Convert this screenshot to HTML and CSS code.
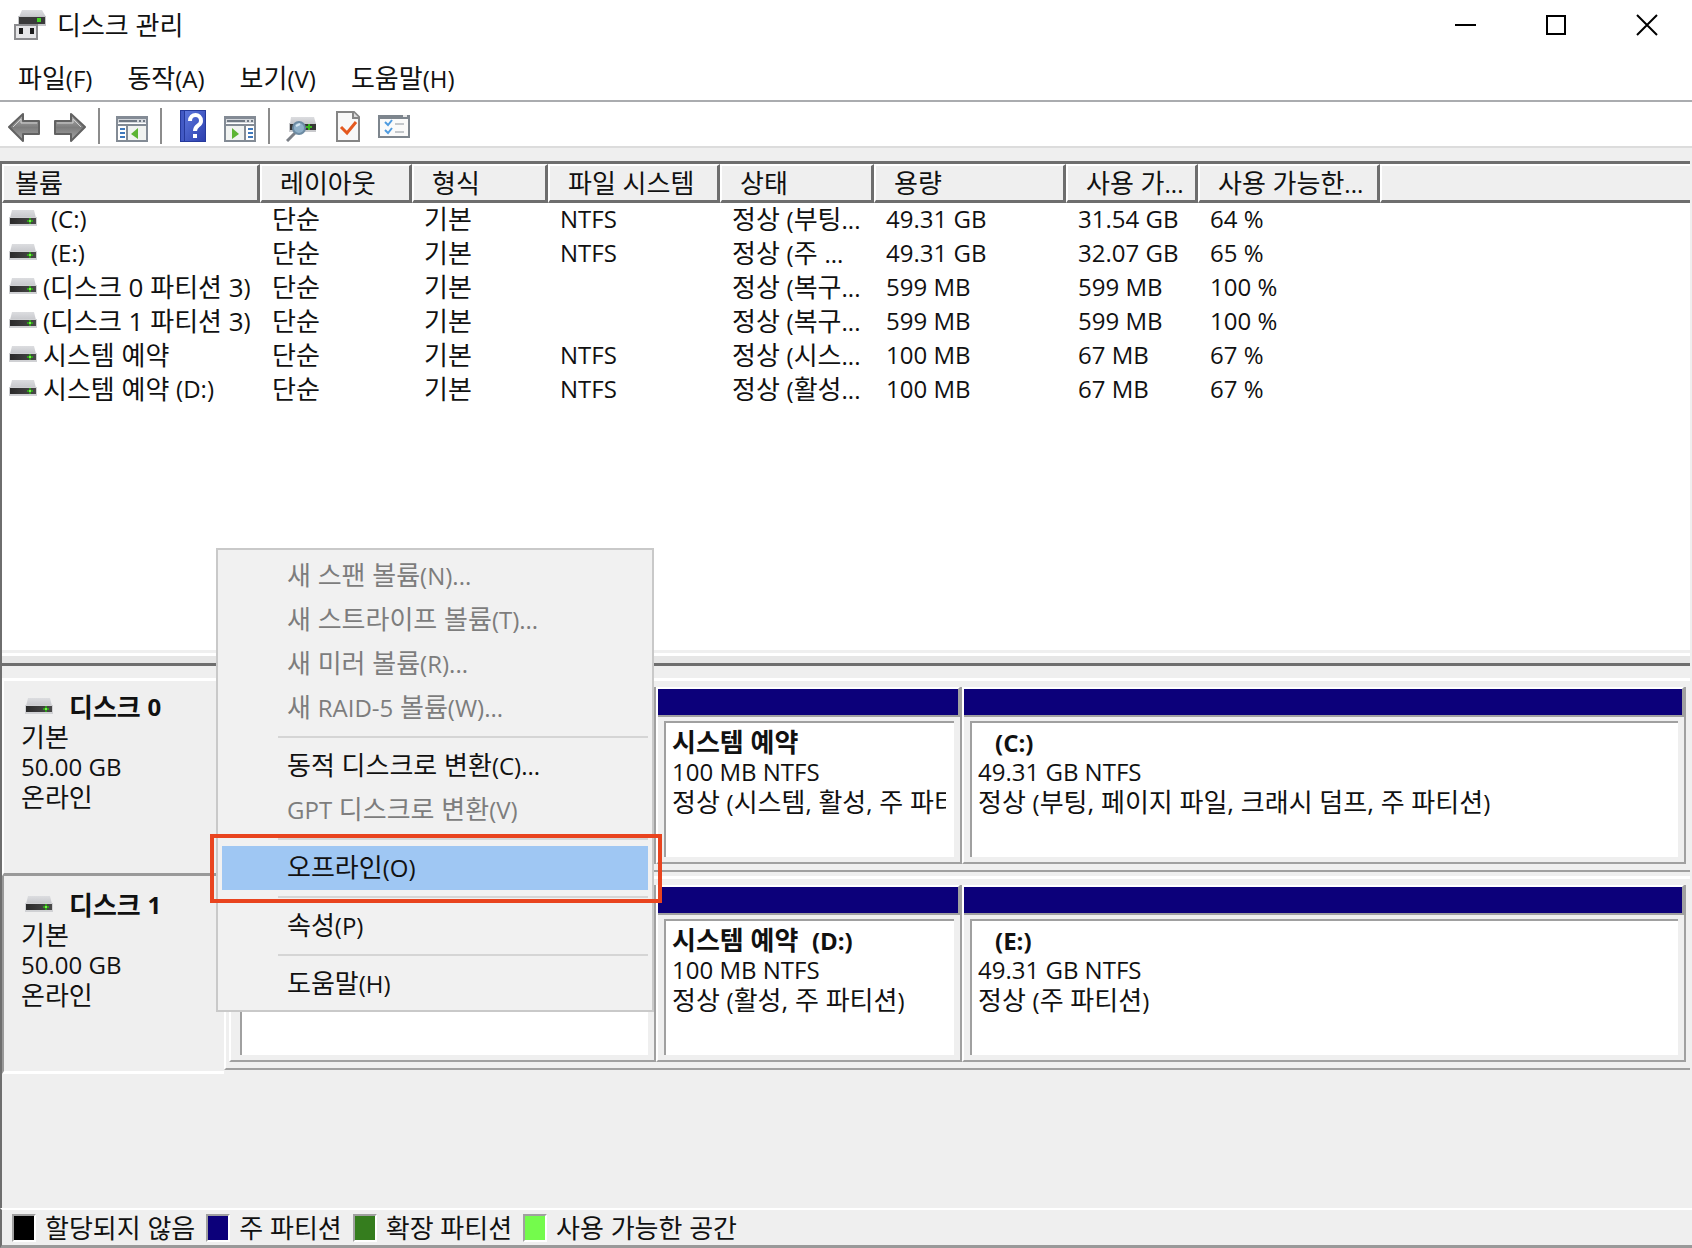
FILE: index.html
```html
<!DOCTYPE html>
<html lang="ko">
<head>
<meta charset="utf-8">
<meta name="viewport" content="width=device-width, initial-scale=1">
<title>디스크 관리</title>
<link rel="stylesheet" href="styles.css">
</head>
<body>
<svg class="defs" width="0" height="0" aria-hidden="true">
  <defs>
    <linearGradient id="lid" x1="0" y1="0" x2="0" y2="1"><stop offset="0" stop-color="#dcdde0"/><stop offset="1" stop-color="#c6c7cb"/></linearGradient>
    <linearGradient id="slot" x1="0" y1="0" x2="1" y2="0"><stop offset="0" stop-color="#2b2b2b"/><stop offset="1" stop-color="#4a4a4a"/></linearGradient>
    <linearGradient id="metal" x1="0" y1="0" x2="0" y2="1"><stop offset="0" stop-color="#b5b5b5"/><stop offset="0.5" stop-color="#7c7c7c"/><stop offset="1" stop-color="#a8a8a8"/></linearGradient>
    <linearGradient id="book" x1="0" y1="0" x2="1" y2="1"><stop offset="0" stop-color="#5c76dc"/><stop offset="1" stop-color="#2c3fae"/></linearGradient>
    <symbol id="drive" viewBox="0 0 28 18">
      <path d="M3 0h22l2 8H1z" fill="url(#lid)"/>
      <path d="M0 7h28v9H0z" fill="#d0d1d4"/>
      <path d="M1 8h26v6H1z" fill="url(#slot)"/>
      <path d="M21 8v6M18 11h6" stroke="#2f9a1c" stroke-width="2"/>
      <path d="M20 10h2v2h-2z" fill="#7cf04a"/>
    </symbol>
  </defs>
</svg>

<header class="titlebar">
  <svg class="app-icon" viewBox="0 0 34 32" aria-hidden="true">
    <path d="M9 1h20l4 7H6z" fill="url(#lid)"/>
    <path d="M5 7h28v10H5z" fill="#c4c5c8"/>
    <path d="M6 8h26v7H6z" fill="#3a3a3a"/>
    <path d="M24 9h4v4h-4z" fill="#43d425"/>
    <path d="M2 16h22v14H2z" fill="#e6e6e8" stroke="#8b8b8e" stroke-width="2"/>
    <path d="M6 19h4v6H6zM17 19h4v6h-4z" fill="#1d1d1d"/>
  </svg>
  <h1 class="title">디스크 관리</h1>
  <div class="controls">
    <button type="button" aria-label="최소화"><svg viewBox="0 0 22 22"><path d="M1 11h21" stroke="#000" stroke-width="2"/></svg></button>
    <button type="button" aria-label="최대화"><svg viewBox="0 0 22 22"><path d="M2 2h18v18H2z" fill="none" stroke="#000" stroke-width="2"/></svg></button>
    <button type="button" aria-label="닫기"><svg viewBox="0 0 22 22"><path d="M1 1l20 20M21 1L1 21" stroke="#000" stroke-width="2"/></svg></button>
  </div>
</header>

<nav class="menubar">
  <button type="button">파일<span class="en">(F)</span></button>
  <button type="button">동작<span class="en">(A)</span></button>
  <button type="button">보기<span class="en">(V)</span></button>
  <button type="button">도움말<span class="en">(H)</span></button>
</nav>

<div class="toolbar">
  <button type="button" aria-label="뒤로"><svg viewBox="0 0 32 32"><path d="M1 17L15 4v7h16v13H15v7z" fill="url(#metal)" stroke="#626262" stroke-width="2" stroke-linejoin="round"/><path d="M5 17l8-8v4h16" fill="none" stroke="#cfcfcf"/></svg></button>
  <button type="button" aria-label="앞으로"><svg viewBox="0 0 32 32"><path d="M31 17L17 4v7H1v13h16v7z" fill="url(#metal)" stroke="#626262" stroke-width="2" stroke-linejoin="round"/><path d="M3 13h16V9l8 8" fill="none" stroke="#cfcfcf"/></svg></button>
  <span class="sep"></span>
  <button type="button" aria-label="콘솔 트리 표시/숨기기"><svg viewBox="0 0 32 32">
    <path d="M1 7h30v24H1z" fill="#fff" stroke="#838b95" stroke-width="2"/><path d="M2 8h28v5H2z" fill="#d5d9de"/><path d="M2 8h28" stroke="#838b95" stroke-width="2"/><path d="M3 11h18M23 11h2M27 11h2" stroke="#6f7883" stroke-width="2"/><path d="M1 15h30M11 15v16" stroke="#838b95" stroke-width="2"/><path d="M4 19h5M4 23h5M4 27h5" stroke="#3f79bd" stroke-width="2"/><path d="M12 16h18v14H12z" fill="#f1f3f1"/><path d="M22 18v11l-7-5z" fill="#5db534"/></svg></button>
  <span class="sep"></span>
  <button type="button" aria-label="도움말"><svg viewBox="0 0 32 32"><path d="M2 0h26v32H2z" fill="#263a9c"/><path d="M7 1h20v30H7z" fill="url(#book)"/><path d="M3 1h3v30H3z" fill="#4259c4"/><path d="M12 11c0-8 11-8 11 0 0 5-6 4-6 10" fill="none" stroke="#fff" stroke-width="4"/><path d="M15 24h4v4h-4z" fill="#fff"/></svg></button>
  <button type="button" aria-label="작업 창 표시/숨기기"><svg viewBox="0 0 32 32">
    <path d="M1 7h30v24H1z" fill="#fff" stroke="#838b95" stroke-width="2"/><path d="M2 8h28v5H2z" fill="#d5d9de"/><path d="M2 8h28" stroke="#838b95" stroke-width="2"/><path d="M3 11h18M23 11h2M27 11h2" stroke="#6f7883" stroke-width="2"/><path d="M1 15h30M21 15v16" stroke="#838b95" stroke-width="2"/><path d="M24 19h5M24 23h5M24 27h5" stroke="#3f79bd" stroke-width="2"/><path d="M2 16h18v14H2z" fill="#f1f3f1"/><path d="M8 18v11l7-5z" fill="#5db534"/></svg></button>
  <span class="sep"></span>
  <button type="button" aria-label="디스크 다시 검색"><svg viewBox="0 0 32 32"><path d="M5 7h23l2 7H4z" fill="url(#lid)"/><path d="M3 13h27v9H3z" fill="#c9cacd"/><path d="M4 14h26v6H4z" fill="#363636"/><path d="M23 14v6M20 17h6" stroke="#39b51f" stroke-width="2"/><path d="M9 23l-8 8" stroke="#7a7f86" stroke-width="3"/><circle cx="13" cy="18" r="6" fill="#8fb0c8" stroke="#6c8ba3" stroke-width="2"/><path d="M10 16l4-2" stroke="#d4e6f2" stroke-width="2"/></svg></button>
  <button type="button" aria-label="속성"><svg viewBox="0 0 32 32"><path d="M5 2h17l5 5v24H5z" fill="#f8f8f8" stroke="#858585" stroke-width="2"/><path d="M21 2v6h6" fill="#dcdcdc" stroke="#858585" stroke-width="2"/><path d="M9 17l6 6 9-11" fill="none" stroke="#e4581e" stroke-width="3"/></svg></button>
  <button type="button" aria-label="설정"><svg viewBox="0 0 32 32"><path d="M1 6h30v21H1z" fill="#fafafa" stroke="#7d858d" stroke-width="2"/><path d="M0 5h32v4H0z" fill="#7d858d"/><path d="M25 6h4" stroke="#e8e8e8" stroke-width="2"/><path d="M7 12l3 3 4-5M7 20l3 3 4-5" fill="none" stroke="#4e9be0" stroke-width="2"/><path d="M17 14h9M17 22h9" stroke="#c3c7cb" stroke-width="2"/></svg></button>
</div>

<main class="workspace">
  <section class="volumes" aria-label="볼륨 목록">
    <table class="volume-table">
      <colgroup>
        <col class="c-vol"><col class="c-layout"><col class="c-type"><col class="c-fs"><col class="c-status"><col class="c-size"><col class="c-free"><col class="c-pct"><col>
      </colgroup>
      <thead>
        <tr><th>볼륨</th><th>레이아웃</th><th>형식</th><th>파일 시스템</th><th>상태</th><th>용량</th><th>사용 가<span class="en">...</span></th><th>사용 가능한<span class="en">...</span></th><th></th></tr>
      </thead>
      <tbody>
        <tr><td><svg class="drive"><use href="#drive"/></svg><span class="letter en">(C:)</span></td><td>단순</td><td>기본</td><td class="en">NTFS</td><td>정상 <span class="en">(</span>부팅<span class="en">...</span></td><td class="en">49.31 GB</td><td class="en">31.54 GB</td><td class="en">64 %</td><td></td></tr>
        <tr><td><svg class="drive"><use href="#drive"/></svg><span class="letter en">(E:)</span></td><td>단순</td><td>기본</td><td class="en">NTFS</td><td>정상 <span class="en">(</span>주 <span class="en">...</span></td><td class="en">49.31 GB</td><td class="en">32.07 GB</td><td class="en">65 %</td><td></td></tr>
        <tr><td><svg class="drive"><use href="#drive"/></svg><span class="en">(</span>디스크 0 파티션 3<span class="en">)</span></td><td>단순</td><td>기본</td><td></td><td>정상 <span class="en">(</span>복구<span class="en">...</span></td><td class="en">599 MB</td><td class="en">599 MB</td><td class="en">100 %</td><td></td></tr>
        <tr><td><svg class="drive"><use href="#drive"/></svg><span class="en">(</span>디스크 1 파티션 3<span class="en">)</span></td><td>단순</td><td>기본</td><td></td><td>정상 <span class="en">(</span>복구<span class="en">...</span></td><td class="en">599 MB</td><td class="en">599 MB</td><td class="en">100 %</td><td></td></tr>
        <tr><td><svg class="drive"><use href="#drive"/></svg>시스템 예약</td><td>단순</td><td>기본</td><td class="en">NTFS</td><td>정상 <span class="en">(</span>시스<span class="en">...</span></td><td class="en">100 MB</td><td class="en">67 MB</td><td class="en">67 %</td><td></td></tr>
        <tr><td><svg class="drive"><use href="#drive"/></svg>시스템 예약 <span class="en">(D:)</span></td><td>단순</td><td>기본</td><td class="en">NTFS</td><td>정상 <span class="en">(</span>활성<span class="en">...</span></td><td class="en">100 MB</td><td class="en">67 MB</td><td class="en">67 %</td><td></td></tr>
      </tbody>
    </table>
  </section>

  <div class="splitter"></div>

  <section class="disks" aria-label="디스크 보기">
    <article class="disk">
      <div class="disk-label">
        <h2><svg class="drive"><use href="#drive"/></svg>디스크 <span class="en">0</span></h2>
        <p>기본</p>
        <p class="en">50.00 GB</p>
        <p>온라인</p>
      </div>
      <div class="partitions">
        <div class="partition"><div class="bar"></div><div class="body"><div class="info"></div></div></div>
        <div class="partition"><div class="bar"></div><div class="body"><div class="info">
          <h3>시스템 예약</h3>
          <p class="en">100 MB NTFS</p>
          <p>정상 <span class="en">(</span>시스템<span class="en">,</span> 활성<span class="en">,</span> 주 파티션<span class="en">)</span></p>
        </div></div></div>
        <div class="partition"><div class="bar"></div><div class="body"><div class="info">
          <h3 class="letter-only"><span class="en">(C:)</span></h3>
          <p class="en">49.31 GB NTFS</p>
          <p>정상 <span class="en">(</span>부팅, 페이지 파일, 크래시 덤프, 주 파티션<span class="en">)</span></p>
        </div></div></div>
      </div>
    </article>
    <article class="disk">
      <div class="disk-label selected">
        <h2><svg class="drive"><use href="#drive"/></svg>디스크 <span class="en">1</span></h2>
        <p>기본</p>
        <p class="en">50.00 GB</p>
        <p>온라인</p>
      </div>
      <div class="partitions">
        <div class="partition"><div class="bar"></div><div class="body"><div class="info"></div></div></div>
        <div class="partition"><div class="bar"></div><div class="body"><div class="info">
          <h3>시스템 예약 &nbsp;<span class="en">(D:)</span></h3>
          <p class="en">100 MB NTFS</p>
          <p>정상 <span class="en">(</span>활성, 주 파티션<span class="en">)</span></p>
        </div></div></div>
        <div class="partition"><div class="bar"></div><div class="body"><div class="info">
          <h3 class="letter-only"><span class="en">(E:)</span></h3>
          <p class="en">49.31 GB NTFS</p>
          <p>정상 <span class="en">(</span>주 파티션<span class="en">)</span></p>
        </div></div></div>
      </div>
    </article>
  </section>

  <footer class="legend">
    <span class="key"><i class="swatch unallocated"></i>할당되지 않음</span>
    <span class="key"><i class="swatch primary"></i>주 파티션</span>
    <span class="key"><i class="swatch extended"></i>확장 파티션</span>
    <span class="key"><i class="swatch free"></i>사용 가능한 공간</span>
  </footer>
</main>

<div class="context-menu" role="menu">
  <button type="button" role="menuitem" disabled>새 스팬 볼륨<span class="en">(N)...</span></button>
  <button type="button" role="menuitem" disabled>새 스트라이프 볼륨<span class="en">(T)...</span></button>
  <button type="button" role="menuitem" disabled>새 미러 볼륨<span class="en">(R)...</span></button>
  <button type="button" role="menuitem" disabled>새 <span class="en">RAID-5</span> 볼륨<span class="en">(W)...</span></button>
  <hr>
  <button type="button" role="menuitem">동적 디스크로 변환<span class="en">(C)...</span></button>
  <button type="button" role="menuitem" disabled><span class="en">GPT</span> 디스크로 변환<span class="en">(V)</span></button>
  <hr>
  <div class="marked"><button type="button" role="menuitem" class="active">오프라인<span class="en">(O)</span></button></div>
  <hr>
  <button type="button" role="menuitem">속성<span class="en">(P)</span></button>
  <hr>
  <button type="button" role="menuitem">도움말<span class="en">(H)</span></button>
</div>
</body>
</html>
```
FILE: styles.css
```css
* { box-sizing: border-box; }

body {
  margin: 0;
  min-height: 100vh;
  display: flex;
  flex-direction: column;
  position: relative;
  background: #fff;
  color: #111;
  font-family: "Open Sans", "Noto Sans CJK KR", sans-serif;
  font-size: 26px;
  line-height: 30px;
}

button {
  margin: 0;
  padding: 0;
  border: 0;
  background: none;
  color: inherit;
  font: inherit;
  text-align: left;
  white-space: nowrap;
}

svg { display: block; flex: none; }
h1, h2, h3, p { margin: 0; font: inherit; white-space: nowrap; }
.defs { position: absolute; }
.en { font-size: 24px; }
span.en { line-height: 1; }

/* Title bar */
.titlebar { display: flex; align-items: center; height: 50px; padding-left: 13px; }
.app-icon { width: 34px; height: 32px; }
.title { margin-left: 10px; }
.controls { display: flex; margin-left: auto; }
.controls button { width: 91px; height: 48px; display: flex; align-items: center; justify-content: center; }
.controls svg { width: 22px; height: 22px; }

/* Menu bar */
.menubar { display: flex; height: 52px; padding: 5px 0 0 1px; border-bottom: 2px solid #aaacaf; }
.menubar button { padding: 0 18px 0 17px; }

/* Toolbar */
.toolbar { display: flex; align-items: center; height: 46px; padding: 4px 0 0 1px; border-bottom: 2px solid #dcdcdc; }
.toolbar button { padding: 0 7px; }
.toolbar svg { width: 32px; height: 32px; }
.sep { width: 2px; height: 36px; margin: 0 9px 0 5px; background: #8c8c8c; }

/* Workspace */
.workspace { flex: 1; display: flex; flex-direction: column; padding-top: 13px; background: #efefef; }
.volumes {
  min-height: 489px;
  margin-right: 2px;
  border-top: 3px solid #6e6e6e;
  border-left: 2px solid #6e6e6e;
  background: #fff;
}

.volume-table { width: 100%; border-collapse: separate; border-spacing: 0; table-layout: fixed; }
.c-vol { width: 258px; }
.c-layout { width: 152px; }
.c-type { width: 136px; }
.c-fs { width: 172px; }
.c-status { width: 154px; }
.c-size { width: 192px; }
.c-free { width: 132px; }
.c-pct { width: 182px; }
.volume-table th {
  height: 39px;
  padding: 0 0 0 18px;
  border: solid;
  border-width: 2px 3px 3px 2px;
  border-color: #fff #6e6e6e #6e6e6e #fff;
  background: #efefef;
  font-weight: 400;
  text-align: left;
  white-space: nowrap;
}
.volume-table th:first-child { padding-left: 11px; }
.volume-table th:last-child { border-right: 0; }
.volume-table td { height: 34px; padding: 0 0 2px 12px; white-space: nowrap; }
.volume-table td:first-child { display: flex; align-items: center; white-space: pre; padding-left: 7px; }
.drive { width: 28px; height: 18px; }
td .drive { margin-right: 6px; }
.letter { margin-left: 8px; }

.splitter {
  height: 16px;
  margin-right: 2px;
  border: solid #6e6e6e;
  border-width: 0 0 3px 2px;
  background: linear-gradient(#efefef 3px, #fff 3px, #fff 6px, #e6e6e6 6px);
}

/* Graphical disk view */
.disks { flex: 1; padding-top: 12px; margin-right: 2px; border-left: 2px solid #6e6e6e; }
.disk { display: grid; grid-template-columns: 222px minmax(0, 1fr); }
.disk-label {
  padding: 11px 0 0 19px;
  border-top: 3px solid #fff;
  border-left: 2px solid #fff;
  border-bottom: 3px solid #999;
}
.disk-label.selected { padding-top: 14px; border-top: 0; border-left-color: #999; border-bottom-color: #fff; }
.disk-label p { margin-left: -2px; }
.disk-label h2 { display: flex; align-items: center; white-space: pre; font-weight: 700; }
.disk-label .drive { margin: 0 16px 0 2px; }
.partitions {
  display: grid;
  grid-template-columns: 427px 306px minmax(0, 1fr);
  margin-bottom: 4px;
  padding: 6px 4px 6px 3px;
  border: solid;
  border-width: 3px 0 2px 2px;
  border-color: #fff #fff #a0a0a0 #fff;
}
.partition {
  min-width: 0;
  border: solid #a0a0a0;
  border-width: 0 2px 2px 0;
  border-left: 2px solid #fff;
}
.bar {
  height: 30px;
  border: solid #a0a0a0;
  border-width: 2px 2px 2px 0;
  border-top-color: #fff;
  background: #0c007a;
}
.body { padding: 4px 6px 5px; }
.partition:first-child .body { padding-left: 9px; }
.info {
  min-height: 136px;
  padding: 4px 8px 0 6px;
  border: solid #a0a0a0;
  border-width: 2px 0 0 2px;
  background: #fff;
}
.info h3 { font-weight: 700; }
.info h3, .info p { overflow-x: clip; }
.letter-only { padding-left: 17px; }

/* Legend */
.legend {
  display: flex;
  align-items: center;
  gap: 11px;
  height: 40px;
  padding-left: 10px;
  border: solid;
  border-width: 2px 0 3px 2px;
  border-color: #fff #fff #999 #6e6e6e;
}
.key { display: flex; align-items: center; gap: 9px; white-space: nowrap; }
.swatch { width: 24px; height: 28px; border: 2px solid; border-color: #a0a0a0 #fff #fff #a0a0a0; }
.unallocated { background: #000; }
.primary { background: #0c007a; }
.extended { background: #357d1e; }
.free { background: #74fb4c; }

/* Context menu */
.context-menu {
  position: absolute;
  top: 548px;
  left: 216px;
  width: 438px;
  display: flex;
  flex-direction: column;
  padding: 4px;
  border: 2px solid #c9c9c9;
  background: #f1f1f1;
}
.context-menu button { width: 100%; height: 44px; padding: 0 0 2px 65px; }
.context-menu button:disabled { color: #7d7d7d; }
.context-menu hr { width: calc(100% - 56px); height: 2px; margin: 6px 0 6px 56px; border: 0; background: #d5d5d5; }
.context-menu .active { background: #9fc7f3; }
.marked { position: relative; }
.marked::after {
  content: "";
  position: absolute;
  inset: -12px -14px -13px -12px;
  border: 4px solid #e9441f;
  pointer-events: none;
}
```
